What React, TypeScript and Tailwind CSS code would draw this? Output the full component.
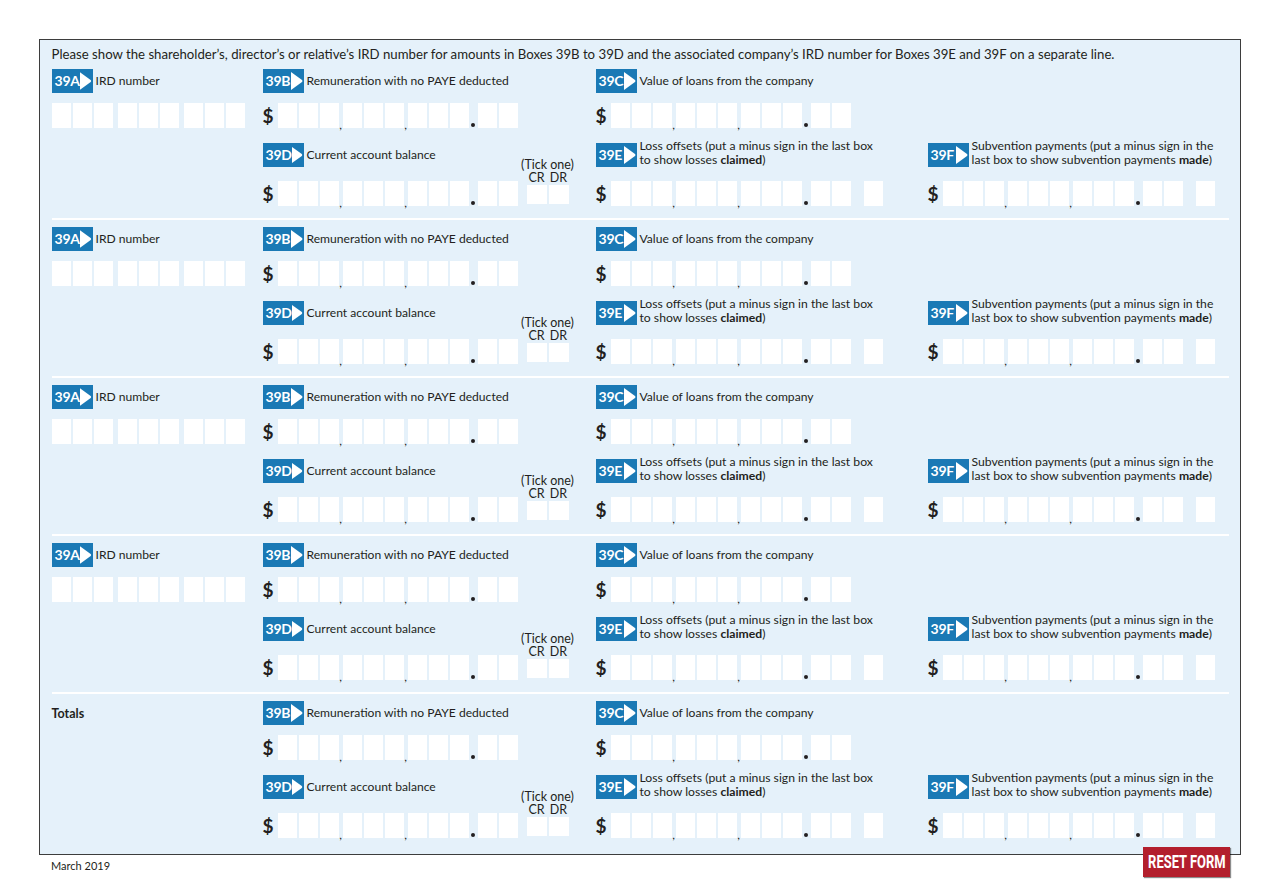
import type { ReactNode } from 'react'

const font = { fontFamily: 'Lato, "Open Sans", sans-serif' }

function Badge({ code }: { code: string }) {
  return (
    <div className="flex h-[24px] w-[41px] shrink-0 items-center justify-between bg-[#1a79b5] pl-[3px] pr-[1px]">
      <span className="text-[14px] font-bold leading-none tracking-[-0.2px] text-white">{code}</span>
      <svg width="12" height="18" viewBox="0 0 12 18">
        <path d="M0 0 L11 8 Q12 9 11 10 L0 18 Z" fill="#fff" />
      </svg>
    </div>
  )
}

function Label({ code, children, two }: { code: string; children: ReactNode; two?: boolean }) {
  return (
    <div className="flex h-[24px] items-center">
      <Badge code={code} />
      <div
        className={
          two
            ? 'ml-[3px] -mt-[4px] whitespace-nowrap text-[12.2px] leading-[14px]'
            : 'ml-[3px] whitespace-nowrap text-[12.1px] leading-[14px]'
        }
      >
        {children}
      </div>
    </div>
  )
}

function Boxes({ n }: { n: number }) {
  return (
    <div className="flex gap-[2px]">
      {Array.from({ length: n }).map((_, i) => (
        <div key={i} className="h-[25px] w-[19px] bg-white" />
      ))}
    </div>
  )
}

function Comma() {
  return (
    <div className="flex h-[25px] w-[4px] items-end justify-center">
      <span className="translate-y-[3px] text-[12px] leading-none">,</span>
    </div>
  )
}

function Dot() {
  return (
    <div className="flex h-[25px] w-[9px] items-end justify-center pb-[1px]">
      <div className="h-[4px] w-[4px] rounded-full bg-[#231f20]" />
    </div>
  )
}

function Money({ extra }: { extra?: boolean }) {
  return (
    <div className="flex h-[25px] items-center">
      <span className="w-[15px] text-[19px] font-bold leading-none">$</span>
      <Boxes n={3} />
      <Comma />
      <Boxes n={3} />
      <Comma />
      <Boxes n={3} />
      <Dot />
      <Boxes n={2} />
      {extra && (
        <div className="ml-[13px]">
          <Boxes n={1} />
        </div>
      )}
    </div>
  )
}

function TickOne() {
  return (
    <div className="mb-[2px] ml-[9px] flex w-[42px] flex-col items-center">
      <span className="whitespace-nowrap text-[12.5px] leading-[13px]">(Tick one)</span>
      <div className="flex gap-[2px] text-[12.5px] leading-[13px]">
        <span className="w-[20px] text-center">CR</span>
        <span className="w-[20px] text-center">DR</span>
      </div>
      <div className="mt-[1px] flex gap-[2px]">
        <div className="h-[19px] w-[20px] bg-white" />
        <div className="h-[19px] w-[20px] bg-white" />
      </div>
    </div>
  )
}

const cols = 'grid grid-cols-[211px_333px_332px_300px]'

function Section({ totals, first }: { totals?: boolean; first?: boolean }) {
  return (
    <div className={first ? 'pt-[6px] pb-[12px]' : 'border-t-2 border-white pt-[7px] pb-[12px]'}>
      <div className={cols}>
        {totals ? (
          <div className="flex h-[24px] items-center pt-[4px] text-[12.5px] font-bold">Totals</div>
        ) : (
          <Label code="39A">IRD number</Label>
        )}
        <Label code="39B">Remuneration with no PAYE deducted</Label>
        <Label code="39C">Value of loans from the company</Label>
        <div />
      </div>
      <div className={cols + ' mt-[10px]'}>
        {totals ? (
          <div />
        ) : (
          <div className="flex gap-[5px]">
            <Boxes n={3} />
            <Boxes n={3} />
            <Boxes n={3} />
          </div>
        )}
        <Money />
        <Money />
        <div />
      </div>
      <div className={cols + ' mt-[15px]'}>
        <div />
        <Label code="39D">Current account balance</Label>
        <Label code="39E" two>
          Loss offsets (put a minus sign in the last box
          <br />
          to show losses <b>claimed</b>)
        </Label>
        <Label code="39F" two>
          Subvention payments (put a minus sign in the
          <br />
          last box to show subvention payments <b>made</b>)
        </Label>
      </div>
      <div className={cols + ' mt-[14px]'}>
        <div />
        <div className="flex h-[25px] items-end">
          <Money />
          <TickOne />
        </div>
        <Money extra />
        <Money extra />
      </div>
    </div>
  )
}

export default function App() {
  return (
    <div className="min-h-[883px] bg-white px-[39px] pt-[39px] text-[#231f20]" style={font}>
      <div className="border-[1.5px] border-[#3d3d3d] bg-[#e5f1fa] px-[11.5px] pt-[4.5px] pb-[4px]">
        <p className="whitespace-nowrap text-[13.2px] leading-[18px]">
          Please show the shareholder’s, director’s or relative’s IRD number for amounts in Boxes 39B to 39D and the associated company’s IRD number for Boxes 39E and 39F on a separate line.
        </p>
        <Section first />
        <Section />
        <Section />
        <Section />
        <Section totals />
      </div>
      <div className="-mt-[7.5px] flex items-start justify-between px-[12px]">
        <span className="mt-[12px] text-[11px] leading-[14px]">March 2019</span>
        <button
          className="mr-[-1px] flex h-[30px] w-[87px] items-center justify-center overflow-hidden bg-[#b31f2d] text-white shadow-[1px_1px_1px_rgba(0,0,0,0.45)]"
          style={{ fontFamily: 'Roboto, "Liberation Sans", sans-serif' }}
        >
          <span className="inline-block scale-x-[0.72] whitespace-nowrap text-[18px] font-bold leading-none">
            RESET FORM
          </span>
        </button>
      </div>
    </div>
  )
}
